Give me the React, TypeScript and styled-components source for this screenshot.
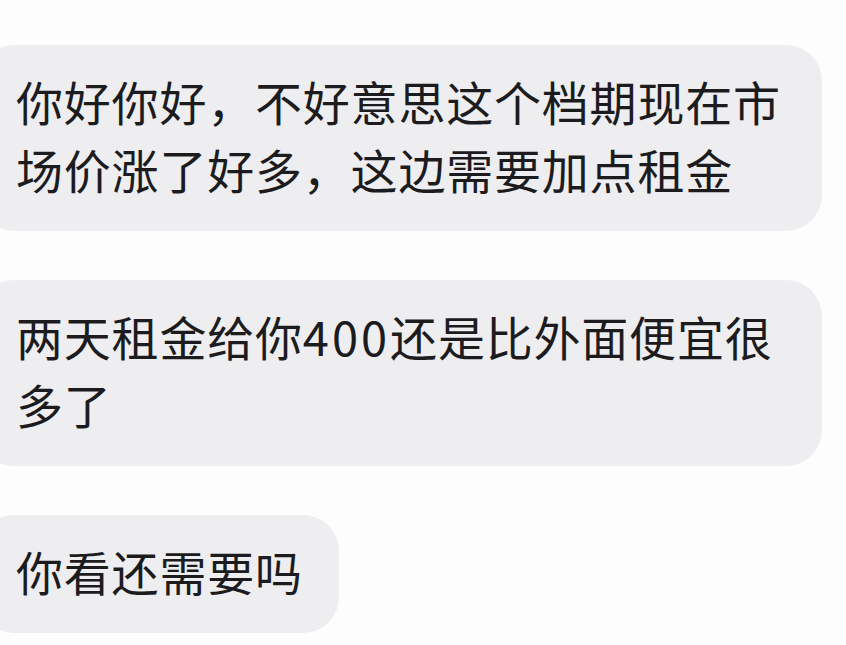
import React from "react";
import styled, { createGlobalStyle } from "styled-components";

const GlobalStyle = createGlobalStyle`
  html, body {
    margin: 0;
    padding: 0;
    background: #fdfdfd;
  }
  body {
    font-family: "Noto Sans CJK SC", "Noto Sans", sans-serif;
    overflow: hidden;
  }
`;

const Thread = styled.div`
  display: flex;
  flex-direction: column;
  align-items: flex-start;
  gap: 49px;
  padding-top: 45px;
  width: 846px;
  height: 645px;
  box-sizing: border-box;
  overflow: hidden;
`;

const Bubble = styled.div`
  margin-left: -22px;
  max-width: 844px;
  box-sizing: border-box;
  padding: 22px 36px 28px 38px;
  background: #eeeef0;
  border-radius: 36px;
  color: #1c1c1e;
  font-size: 47px;
  line-height: 68px;
  letter-spacing: 0.8px;
  font-weight: 400;
  word-break: break-all;
`;

const Digits = styled.span`
  letter-spacing: 3px;
`;

export default function App() {
  return (
    <>
      <GlobalStyle />
      <Thread>
        <Bubble>你好你好，不好意思这个档期现在市场价涨了好多，这边需要加点租金</Bubble>
        <Bubble>
          两天租金给你<Digits>400</Digits>还是比外面便宜很多了
        </Bubble>
        <Bubble>你看还需要吗</Bubble>
      </Thread>
    </>
  );
}
